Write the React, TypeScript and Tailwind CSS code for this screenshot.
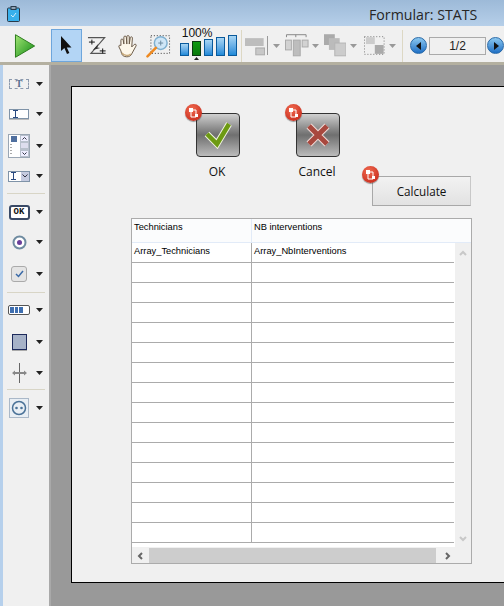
import type { ReactNode } from 'react';

const font = { fontFamily: '"Open Sans", "Noto Sans", sans-serif' };

function Caret({ color = '#222' }: { color?: string }) {
    return (
        <svg width="7" height="4" viewBox="0 0 7 4" className="shrink-0">
            <path d="M0 0h7L3.500 4z" fill={color} />
        </svg>
    );
}

function Zoom100() {
    const bars = [
        { h: 13, on: false },
        { h: 15, on: true },
        { h: 17, on: false },
        { h: 19, on: false },
        { h: 21, on: false },
    ];
    return (
        <div className="flex flex-col items-start w-[57px] ml-[9px] self-start">
            <span className="h-[6px] text-[12px] leading-[8px] ml-[2px] font-['Liberation_Sans',sans-serif] text-[#111]">100%</span>
            <div className="flex items-end gap-[3px] h-[21px]">
                {bars.map((b, i) => (
                    <div
                        key={i}
                        style={{ height: b.h }}
                        className={
                            b.on
                                ? 'relative w-[9px] border border-[#0b3a12] bg-gradient-to-b from-[#0e9a12] to-[#0a7a0c]'
                                : 'w-[9px] border border-[#0a5a9c] bg-gradient-to-b from-[#a8d6f4] to-[#1c8ad8]'
                        }
                    >
                        {b.on && (
                            <svg width="5" height="3" viewBox="0 0 5 3" className="absolute left-[1px] -bottom-[5px]">
                                <path d="M0 3h5L2.500 0z" fill="#222" />
                            </svg>
                        )}
                    </div>
                ))}
            </div>
        </div>
    );
}

function TopTools() {
    return (
        <div className="flex items-center h-[36px] pt-[3px]">
            <svg width="22" height="26" viewBox="0 0 22 26" className="ml-[11px]">
                <defs>
                    <linearGradient id="play" x1="0" y1="0" x2="1" y2="1">
                        <stop offset="0" stopColor="#a4e676" />
                        <stop offset="1" stopColor="#0e8a12" />
                    </linearGradient>
                </defs>
                <path d="M1.500 1.500 21 13 1.500 24.500z" fill="url(#play)" stroke="#2a7a1c" strokeWidth="1" />
            </svg>
            <div className="w-[32px] h-[33px] ml-[15px] bg-[#b3d5f5] border border-[#6ea6dc] flex items-center justify-center">
                <svg width="14" height="20" viewBox="0 0 14 20">
                    <path d="M2 0v15l3.400-3 2.600 6 2.400-1-2.600-5.600H12.500z" fill="#111" />
                </svg>
            </div>
            <svg width="22" height="20" viewBox="0 0 22 20" className="ml-[4px]">
                <path d="M2 1.500h17L5 17.500h15" fill="none" stroke="#555" strokeWidth="1.200" />
                <path d="M3 6h6M6 3.500v5M14 15h6M17 12.500v5" stroke="#111" strokeWidth="1" />
                <path d="M7 14l5.500-6-1 3.500 3 .5z" fill="#333" />
            </svg>
            <svg width="22" height="24" viewBox="0 0 22 24" className="ml-[9px]">
                <path d="M4 11V6c0-1.500 2-1.500 2.300 0L7 10V3c0-1.500 2.300-1.500 2.500 0l.5 7V2.500c0-1.500 2.300-1.500 2.500 0V10l1-6.500c.4-1.400 2.300-1 2.200.4L15 13l2.500-2.500c1.200-1 2.800.2 1.800 1.600L15 20c-1 2-2.500 3-5 3-4 0-5.500-2-6-6l-2-4c-.6-1.500 1-2.500 2-1.500z" fill="#fdf7ea" stroke="#6a5a48" strokeWidth="1" />
                <path d="M5 19c2 3 7 3.500 9 1" fill="none" stroke="#c8a878" strokeWidth="1.500" />
            </svg>
            <svg width="25" height="24" viewBox="0 0 25 24" className="ml-[8px]">
                <rect x="5" y="1.500" width="19" height="18" fill="none" stroke="#333" strokeWidth="1" strokeDasharray="1 2" />
                <circle cx="15" cy="9" r="6.500" fill="#cfe6f7" stroke="#7fb0d0" strokeWidth="1.500" />
                <path d="M12.500 9h5M15 6.500v5" stroke="#6a8aa0" strokeWidth="1" />
                <path d="M1.500 22.500 10 14" stroke="#ee8a22" strokeWidth="2.600" strokeLinecap="round" />
            </svg>
            <Zoom100 />
            <div className="w-px h-[32px] bg-[#ddd8c4] ml-[4px]" />
            <svg width="21" height="21" viewBox="0 0 21 21" className="ml-[3px]">
                <rect x="0" y="3" width="19" height="8" fill="#bdbdbd" />
                <rect x="11" y="13" width="9" height="7" fill="#c8c8c8" stroke="#aaa" />
            </svg>
            <div className="w-px h-[19px] bg-[#999] ml-[2px]" />
            <div className="ml-[5px]"><Caret color="#999" /></div>
            <svg width="24" height="23" viewBox="0 0 24 23" className="ml-[5px]">
                <path d="M1.500 3V.500h20V3M11 .500V3" fill="none" stroke="#888" />
                <rect x=".500" y="6" width="6" height="10" fill="#d2d2d2" stroke="#aaa" />
                <rect x="8.500" y="6" width="7" height="16" fill="#bdbdbd" stroke="#aaa" />
                <rect x="17.500" y="6" width="6" height="7" fill="#d2d2d2" stroke="#aaa" />
            </svg>
            <div className="ml-[3px]"><Caret color="#999" /></div>
            <svg width="23" height="23" viewBox="0 0 23 23" className="ml-[5px]">
                <rect x="0" y="0" width="11" height="11" fill="#aaa" />
                <rect x="5" y="4" width="11" height="12" fill="#bbb" />
                <rect x="11" y="9" width="11.500" height="13" fill="#ccc" stroke="#b4b4b4" />
            </svg>
            <div className="ml-[4px]"><Caret color="#999" /></div>
            <svg width="21" height="20" viewBox="0 0 21 20" className="ml-[7px]">
                <rect x=".500" y=".500" width="20" height="18" fill="none" stroke="#777" strokeDasharray="1 2" />
                <rect x="2" y="1" width="9" height="7" fill="#ccc" />
                <rect x="11" y="9" width="9" height="9" fill="#aaa" />
            </svg>
            <div className="ml-[4px]"><Caret color="#999" /></div>
            <div className="w-px h-[32px] bg-[#ddd8c4] ml-[6px]" />
            <div className="w-[17px] h-[17px] shrink-0 ml-[7px] rounded-full bg-gradient-to-b from-[#8ac8f0] to-[#1c6fc4] border border-[#2a6aa8] flex items-center justify-center">
                <svg width="6" height="8" viewBox="0 0 6 8"><path d="M5 0v8L0 4z" fill="#111" /></svg>
            </div>
            <div className="w-[57px] h-[18px] shrink-0 ml-[2px] border border-[#aaa] bg-[#f0f0f0] text-[12px] leading-[16px] text-center text-[#222] font-['Liberation_Sans',sans-serif]">1/2</div>
            <div className="w-[17px] h-[17px] shrink-0 ml-[1px] rounded-full bg-gradient-to-b from-[#8ac8f0] to-[#1c6fc4] border border-[#2a6aa8] flex items-center justify-center">
                <svg width="6" height="8" viewBox="0 0 6 8"><path d="M1 0v8l5-4z" fill="#111" /></svg>
            </div>
        </div>
    );
}

function PaletteItem({ children, h }: { children: ReactNode; h: number }) {
    return (
        <div style={{ height: h }} className="flex items-center pl-[3px]">
            <div className="w-[26px] flex items-center justify-center">{children}</div>
            <div className="ml-[4px]"><Caret /></div>
        </div>
    );
}

function IBeam({ color = '#2a4a80' }: { color?: string }) {
    return (
        <svg width="5" height="8" viewBox="0 0 5 8" className="shrink-0">
            <path d="M0 .500h5M0 7.500h5M2.500 .500v7" stroke={color} strokeWidth="1" fill="none" />
        </svg>
    );
}

function Palette() {
    return (
        <div className="w-[48px] shrink-0 bg-[#f0f0f0] border-r-[2px] border-[#a9a9a9] pt-[4px]">
            <PaletteItem h={30}>
                <div className="w-[20px] h-[10px] border border-dashed border-[#8c9aae] text-[10px] leading-[8px] font-bold text-center text-[#5a6f90] font-['Liberation_Serif',serif]">T</div>
            </PaletteItem>
            <PaletteItem h={30}>
                <div className="w-[20px] h-[10px] bg-white border border-[#7f93a8] shadow-[0_1px_0_#bbb] flex items-center pl-[3px]">
                    <IBeam />
                </div>
            </PaletteItem>
            <PaletteItem h={34}>
                <svg width="22" height="24" viewBox="0 0 22 24">
                    <rect x=".500" y=".500" width="21" height="23" fill="#fff" stroke="#9aa6b4" />
                    <rect x="3" y="2" width="6" height="6" fill="#4f6f9f" />
                    <path d="M3 10v12" stroke="#555" strokeDasharray="1 2" />
                    <rect x="12" y="1" width="9" height="22" fill="#b8c0cc" />
                    <rect x="13" y="2" width="7" height="5" fill="#eef" />
                    <rect x="13" y="9" width="7" height="5" fill="#dde" />
                    <rect x="13" y="17" width="7" height="5" fill="#eef" />
                    <path d="M14.500 5.500l2-2 2 2M14.500 18.500l2 2 2-2" fill="none" stroke="#334" strokeWidth="1" />
                </svg>
            </PaletteItem>
            <PaletteItem h={26}>
                <div className="w-[22px] h-[11px] bg-white border border-[#7f93a8] flex items-center justify-between pl-[2px]">
                    <IBeam />
                    <span className="w-[8px] h-[9px] bg-[#c5cbe0] flex items-center justify-center">
                        <svg width="6" height="4" viewBox="0 0 6 4"><path d="M.500 .500 3 3l2.500-2.500" fill="none" stroke="#334" /></svg>
                    </span>
                </div>
            </PaletteItem>
            <div className="h-px bg-[#d8d5c6] mx-[4px] my-[4px]" />
            <PaletteItem h={28}>
                <div className="w-[21px] h-[15px] bg-white border-[2px] border-[#3a4a66] rounded-[3px] text-[9px] leading-[11px] font-bold text-center text-[#111] font-['Liberation_Mono',monospace]">OK</div>
            </PaletteItem>
            <PaletteItem h={32}>
                <svg width="15" height="15" viewBox="0 0 15 15">
                    <circle cx="7.500" cy="7.500" r="6" fill="#fff" stroke="#6f8ba0" strokeWidth="2" />
                    <circle cx="7.500" cy="7.500" r="2.500" fill="#6a3f9a" />
                </svg>
            </PaletteItem>
            <PaletteItem h={32}>
                <div className="w-[16px] h-[16px] rounded-[3px] bg-[#e4e4e4] border border-[#aaa] flex items-center justify-center">
                    <svg width="9" height="8" viewBox="0 0 9 8"><path d="M1 4l2.500 2.500L8 1" fill="none" stroke="#3a6aa8" strokeWidth="1.500" /></svg>
                </div>
            </PaletteItem>
            <div className="h-px bg-[#d8d5c6] mx-[4px] my-[2px]" />
            <PaletteItem h={30}>
                <div className="w-[22px] h-[10px] bg-white border border-[#555] rounded-[2px] flex gap-px p-px pr-[6px]">
                    <span className="flex-1 bg-[#3f6fb0]" />
                    <span className="flex-1 bg-[#3f6fb0]" />
                    <span className="flex-1 bg-[#3f6fb0]" />
                </div>
            </PaletteItem>
            <PaletteItem h={34}>
                <div className="w-[15px] h-[16px] bg-[#a6b2c8] border border-[#1d2a5c] shadow-[0_1px_0_#aaa]" />
            </PaletteItem>
            <PaletteItem h={28}>
                <svg width="15" height="20" viewBox="0 0 15 20">
                    <path d="M7.500 0v20" stroke="#666" strokeWidth="1" />
                    <path d="M0 10l3-2.500v1.500h9V7.500l3 2.500-3 2.500V11H3v1.500z" fill="#888" />
                </svg>
            </PaletteItem>
            <div className="h-px bg-[#d8d5c6] mx-[4px] my-[2px]" />
            <PaletteItem h={32}>
                <div className="w-[20px] h-[20px] bg-[#e8eef4] border border-[#aab8c8] flex items-center justify-center">
                    <svg width="16" height="16" viewBox="0 0 16 16">
                        <circle cx="8" cy="8" r="6.500" fill="none" stroke="#4a7298" strokeWidth="1.500" />
                        <circle cx="5.500" cy="8" r="1.300" fill="#4a7298" />
                        <circle cx="10.500" cy="8" r="1.300" fill="#4a7298" />
                    </svg>
                </div>
            </PaletteItem>
        </div>
    );
}

function Badge() {
    return (
        <div className="w-[17px] h-[17px] rounded-full bg-[radial-gradient(circle_at_40%_30%,#f06a50,#c01f12)] shadow-[0_1px_1px_#0006] flex items-center justify-center">
            <svg width="11" height="11" viewBox="0 0 11 11">
                <path d="M3 1v9h5M3 3h5v5" stroke="#fff" strokeWidth="1" fill="none" />
                <rect x="1" y="1" width="4" height="4" fill="#fff" />
                <rect x="7" y="7" width="3" height="3" fill="#fff" />
            </svg>
        </div>
    );
}

function IconButton({ label, left, kind }: { label: string; left: number; kind: 'ok' | 'cancel' }) {
    return (
        <div style={{ left }} className="absolute top-[19px] w-[60px] flex flex-col items-center">
            <div className="relative w-[44px] h-[44px] mt-[7px] rounded-[4px] border-[1.500px] border-[#333] bg-gradient-to-b from-[#d0d0d0] via-[#6f6f6f] to-[#bcbcbc] flex items-center justify-center">
                <svg width="28" height="28" viewBox="0 0 28 28">
                    {kind === 'ok' ? (
                        <>
                            <path d="M3 13l10 10L25 3" fill="none" stroke="#f0f4e0" strokeWidth="6.500" />
                            <path d="M3 13l10 10L25 3" fill="none" stroke="#6d9a12" strokeWidth="4.500" />
                        </>
                    ) : (
                        <>
                            <path d="M5 5l18 18M23 5 5 23" fill="none" stroke="#f0dcd8" strokeWidth="7" />
                            <path d="M5 5l18 18M23 5 5 23" fill="none" stroke="#a8483e" strokeWidth="5" />
                        </>
                    )}
                </svg>
                <div className="absolute -left-[12px] -top-[10px]"><Badge /></div>
            </div>
            <span className="mt-[7px] pr-[2px] text-[12px] leading-[16px] text-[#111]">{label}</span>
        </div>
    );
}

function DataTable() {
    const rows = Array.from({ length: 14 });
    return (
        <div className="absolute left-[59px] top-[131px] w-[341px] h-[346px] border border-[#ababab] bg-[#f0f0f0] flex flex-col font-['Liberation_Sans',sans-serif] text-[9.300px] text-black">
            <div className="flex h-[24px] shrink-0 bg-[#fbfcfd] border-b border-[#e2ebf8]">
                <div className="w-[120px] pl-[2px] pt-[2px] border-r border-[#e2ebf8]">Technicians</div>
                <div className="pl-[2px] pt-[2px]">NB interventions</div>
            </div>
            <div className="flex flex-1 min-h-0">
                <div className="w-[323px] bg-white overflow-hidden h-[304px]">
                    <div className="flex h-[20px] border-b border-[#ababab] w-[322px]">
                        <div className="w-[120px] pl-[2px] pt-[2px] border-r border-[#ababab]">Array_Technicians</div>
                        <div className="pl-[2px] pt-[2px]">Array_NbInterventions</div>
                    </div>
                    {rows.map((_, i) => (
                        <div key={i} className="flex h-[20px] border-b border-[#ababab] w-[322px]">
                            <div className="w-[120px] border-r border-[#ababab]" />
                        </div>
                    ))}
                </div>
                <div className="flex-1 flex flex-col items-center justify-between pt-[7px] pb-[6px]">
                    <svg width="8" height="6" viewBox="0 0 8 6"><path d="M1 5l3-3 3 3" fill="none" stroke="#c8c8c8" strokeWidth="2" /></svg>
                    <svg width="8" height="6" viewBox="0 0 8 6"><path d="M1 1l3 3 3-3" fill="none" stroke="#c8c8c8" strokeWidth="2" /></svg>
                </div>
            </div>
            <div className="flex items-center h-[15px] shrink-0 pl-[5px]">
                <svg width="7" height="8" viewBox="0 0 7 8"><path d="M5 1 2 4l3 3" fill="none" stroke="#666" strokeWidth="2" /></svg>
                <div className="w-[287px] h-[15px] ml-[5px] bg-[#cdcdcd]" />
                <svg width="7" height="8" viewBox="0 0 7 8" className="ml-[8px]"><path d="M2 1l3 3-3 3" fill="none" stroke="#666" strokeWidth="2" /></svg>
            </div>
        </div>
    );
}

function FormCanvas() {
    return (
        <div className="relative h-[497px] ml-[20px] bg-[#f0f0f0] border-t border-l border-black border-b">
            <IconButton kind="ok" label="OK" left={116} />
            <IconButton kind="cancel" label="Cancel" left={216} />
            <div className="absolute left-[300px] top-[89px] w-[99px] h-[30px] border border-[#a8a8a8] border-r-[#c8c8c8] bg-gradient-to-b from-[#f2f2f2] to-[#e2e2e2] text-[11.700px] leading-[28px] text-center text-[#111]">
                Calculate
                <div className="absolute -left-[11px] -top-[11px]"><Badge /></div>
            </div>
            <DataTable />
        </div>
    );
}

export default function App() {
    return (
        <div style={font} className="w-[504px] h-[606px] overflow-hidden bg-[#999999] flex flex-col">
            {/* Title bar */}
            <div className="relative h-[26px] shrink-0 bg-gradient-to-b from-[#9dbad8] to-[#b6cfe9]">
                <svg width="13" height="16" viewBox="0 0 13 16" className="absolute left-[7px] top-[6px]">
                    <rect x=".500" y="2" width="12" height="13.500" rx="1" fill="#38b0ec" stroke="#2a3a4a" />
                    <rect x="4" y=".500" width="5" height="3" fill="#8fa3b5" stroke="#2a3a4a" />
                    <path d="M4 9l2 2 3-4" fill="none" stroke="#cfeefc" />
                </svg>
                <span className="absolute left-[369px] top-[5px] text-[14.200px] leading-[20px] text-[#262626]">Formular: STATS</span>
            </div>
            <div className="flex-1 min-h-0 border-l-[3px] border-[#b6d0ec] flex flex-col">
                {/* Top toolbar */}
                <div className="shrink-0 bg-[#f0f0f0] border-b-[3px] border-[#b4b0a0] h-[39px] overflow-hidden -ml-[3px] pl-[3px]">
                    <TopTools />
                </div>
                <div className="flex flex-1 min-h-0">
                    <Palette />
                    <div className="flex-1 pt-[21px]">
                        <FormCanvas />
                    </div>
                </div>
            </div>
        </div>
    );
}
